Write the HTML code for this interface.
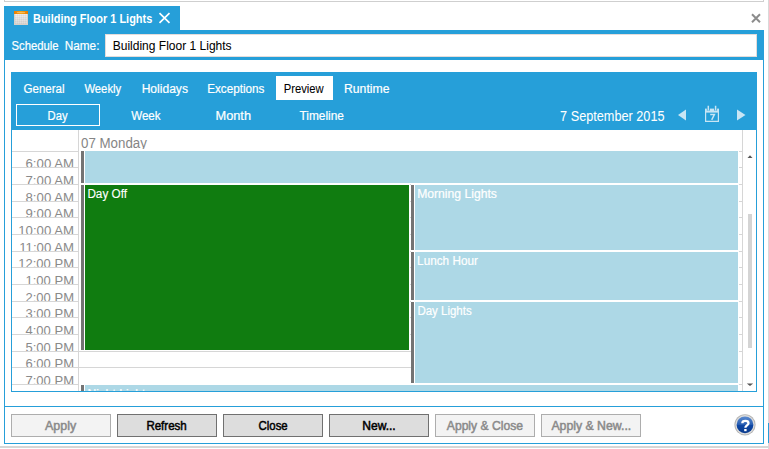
<!DOCTYPE html>
<html><head><meta charset="utf-8">
<style>
html,body{margin:0;padding:0;width:769px;height:449px;overflow:hidden;background:#fff;position:relative;font-family:"Liberation Sans",sans-serif;}
.a{position:absolute;box-sizing:content-box;}
svg text{font-family:"Liberation Sans",sans-serif;white-space:pre;}
</style></head><body>
<div class="a" style="left:4px;top:-10px;width:758px;height:11px;border:1px solid #cfcfcf;border-top:none;"></div>
<div class="a" style="left:768px;top:0px;width:1px;height:449px;background:#d9d9d9;"></div>
<div class="a" style="left:768px;top:423px;width:1px;height:20px;background:#269fd9;"></div>
<div class="a" style="left:0px;top:446px;width:769px;height:2px;background:#d6d6d6;"></div>
<div class="a" style="left:4px;top:6px;width:176px;height:24px;background:#269fd9;"></div>
<div class="a" style="left:14px;top:11px;width:14px;height:14px;background:repeating-linear-gradient(90deg,rgba(0,0,0,0) 0 1px,rgba(0,0,0,0.035) 1px 2px),repeating-linear-gradient(0deg,rgba(0,0,0,0) 0 1px,rgba(0,0,0,0.035) 1px 2px),linear-gradient(#f4f4f4,#dcd9d6);box-shadow:inset 0 0 0 1px #d8d0c8;"></div>
<div class="a" style="left:14px;top:11px;width:14px;height:3px;background:linear-gradient(90deg,#e97d00,#f7a418 50%,#e97d00);"></div>
<div class="a" style="left:17px;top:12px;width:8px;height:1px;background:rgba(255,255,255,0.3);"></div>
<svg class="a" style="left:158px;top:12px" width="13" height="12" viewBox="0 0 13 12"><path d="M1.5 1.2L11.5 10.8M11.5 1.2L1.5 10.8" stroke="#fff" stroke-width="1.7"/></svg>
<svg class="a" style="left:750px;top:13px" width="12" height="11" viewBox="0 0 12 11"><path d="M2 1.2L10 9.2M10 1.2L2 9.2" stroke="#8c8c8c" stroke-width="2"/></svg>
<div class="a" style="left:4px;top:30px;width:760px;height:30px;background:#269fd9;"></div>
<div class="a" style="left:105px;top:34px;width:650px;height:21px;background:#fff;border:1px solid #e4dcda;"></div>
<div class="a" style="left:4px;top:60px;width:758px;height:383px;border:1px solid #269fd9;border-top:none;"></div>
<div class="a" style="left:11px;top:72px;width:744px;height:318px;border:1px solid #269fd9;"></div>
<div class="a" style="left:11px;top:72px;width:746px;height:58px;background:#269fd9;"></div>
<div class="a" style="left:276px;top:76px;width:57px;height:24px;background:#fff;"></div>
<div class="a" style="left:16px;top:104px;width:82px;height:20px;border:1px solid #fff;"></div>
<svg class="a" style="left:670px;top:100px" width="87" height="30" viewBox="670 100 87 30">
<path d="M678 115L686 109.5V120.5Z" fill="#c8e5f4"/>
<path d="M737 109.5L745.5 115L737 120.5Z" fill="#c8e5f4"/>
<path d="M705.6 109V121.4H718.4V109" fill="none" stroke="#c8e5f4" stroke-width="1.2"/>
<rect x="705" y="108.6" width="14" height="4" fill="#c8e5f4"/>
<rect x="706.8" y="108" width="3" height="2.6" fill="#269fd9"/>
<rect x="714.1" y="108" width="3" height="2.6" fill="#269fd9"/>
<path d="M708.3 105.8V110.6M715.6 105.8V110.6" stroke="#c8e5f4" stroke-width="1.5"/>
<path d="M710.2 114.6H714.4L711.7 119.8" fill="none" stroke="#c8e5f4" stroke-width="1.5"/>
</svg>
<div class="a" style="left:78px;top:130px;width:1px;height:261px;background:#d6d6d6;"></div>
<div class="a" style="left:742px;top:130px;width:1px;height:261px;background:#d6d6d6;"></div>
<div class="a" style="left:12px;top:151px;width:66px;height:1px;background:#d6d6d6;"></div>
<div class="a" style="left:79px;top:151px;width:663px;height:1px;background:#d6d6d6;"></div>
<div class="a" style="left:12px;top:167px;width:66px;height:1px;background:#d6d6d6;"></div>
<div class="a" style="left:79px;top:167px;width:663px;height:1px;background:#d6d6d6;"></div>
<div class="a" style="left:12px;top:184px;width:66px;height:1px;background:#d6d6d6;"></div>
<div class="a" style="left:79px;top:184px;width:663px;height:1px;background:#d6d6d6;"></div>
<div class="a" style="left:12px;top:201px;width:66px;height:1px;background:#d6d6d6;"></div>
<div class="a" style="left:79px;top:201px;width:663px;height:1px;background:#d6d6d6;"></div>
<div class="a" style="left:12px;top:217px;width:66px;height:1px;background:#d6d6d6;"></div>
<div class="a" style="left:79px;top:217px;width:663px;height:1px;background:#d6d6d6;"></div>
<div class="a" style="left:12px;top:234px;width:66px;height:1px;background:#d6d6d6;"></div>
<div class="a" style="left:79px;top:234px;width:663px;height:1px;background:#d6d6d6;"></div>
<div class="a" style="left:12px;top:251px;width:66px;height:1px;background:#d6d6d6;"></div>
<div class="a" style="left:79px;top:251px;width:663px;height:1px;background:#d6d6d6;"></div>
<div class="a" style="left:12px;top:267px;width:66px;height:1px;background:#d6d6d6;"></div>
<div class="a" style="left:79px;top:267px;width:663px;height:1px;background:#d6d6d6;"></div>
<div class="a" style="left:12px;top:284px;width:66px;height:1px;background:#d6d6d6;"></div>
<div class="a" style="left:79px;top:284px;width:663px;height:1px;background:#d6d6d6;"></div>
<div class="a" style="left:12px;top:301px;width:66px;height:1px;background:#d6d6d6;"></div>
<div class="a" style="left:79px;top:301px;width:663px;height:1px;background:#d6d6d6;"></div>
<div class="a" style="left:12px;top:317px;width:66px;height:1px;background:#d6d6d6;"></div>
<div class="a" style="left:79px;top:317px;width:663px;height:1px;background:#d6d6d6;"></div>
<div class="a" style="left:12px;top:334px;width:66px;height:1px;background:#d6d6d6;"></div>
<div class="a" style="left:79px;top:334px;width:663px;height:1px;background:#d6d6d6;"></div>
<div class="a" style="left:12px;top:351px;width:66px;height:1px;background:#d6d6d6;"></div>
<div class="a" style="left:79px;top:351px;width:663px;height:1px;background:#d6d6d6;"></div>
<div class="a" style="left:12px;top:367px;width:66px;height:1px;background:#d6d6d6;"></div>
<div class="a" style="left:79px;top:367px;width:663px;height:1px;background:#d6d6d6;"></div>
<div class="a" style="left:12px;top:384px;width:66px;height:1px;background:#d6d6d6;"></div>
<div class="a" style="left:79px;top:384px;width:663px;height:1px;background:#d6d6d6;"></div>
<div class="a" style="left:79px;top:151px;width:660px;height:33px;background:#fff;"></div>
<div class="a" style="left:79px;top:184px;width:331px;height:167px;background:#fff;"></div>
<div class="a" style="left:411px;top:184px;width:328px;height:67px;background:#fff;"></div>
<div class="a" style="left:411px;top:251px;width:328px;height:50px;background:#fff;"></div>
<div class="a" style="left:411px;top:301px;width:328px;height:83px;background:#fff;"></div>
<div class="a" style="left:79px;top:384px;width:660px;height:7px;background:#fff;"></div>
<div class="a" style="left:81px;top:151px;width:3px;height:32px;background:#747474;"></div>
<div class="a" style="left:85px;top:151px;width:653px;height:32px;background:#add8e6;"></div>
<div class="a" style="left:81px;top:185px;width:3px;height:165px;background:#747474;"></div>
<div class="a" style="left:85px;top:185px;width:324px;height:165px;background:#107c10;"></div>
<div class="a" style="left:411px;top:185px;width:3px;height:65px;background:#747474;"></div>
<div class="a" style="left:415px;top:185px;width:323px;height:65px;background:#add8e6;"></div>
<div class="a" style="left:411px;top:252px;width:3px;height:48px;background:#747474;"></div>
<div class="a" style="left:415px;top:252px;width:323px;height:48px;background:#add8e6;"></div>
<div class="a" style="left:411px;top:302px;width:3px;height:81px;background:#747474;"></div>
<div class="a" style="left:415px;top:302px;width:323px;height:81px;background:#add8e6;"></div>
<div class="a" style="left:81px;top:385px;width:3px;height:6px;background:#747474;"></div>
<div class="a" style="left:85px;top:385px;width:653px;height:6px;background:#add8e6;"></div>
<svg class="a" style="left:745px;top:153px" width="10" height="6"><path d="M2.5 5L5 2.2L7.5 5Z" fill="#555"/></svg>
<svg class="a" style="left:745px;top:381px" width="10" height="6"><path d="M1.8 2.4H8.2L5 5Z" fill="#555"/></svg>
<div class="a" style="left:748px;top:214px;width:4px;height:134px;background:#d4d4d4;"></div>
<div class="a" style="left:5px;top:406px;width:758px;height:1px;background:#269fd9;"></div>
<div class="a" style="left:11px;top:414px;width:98px;height:21px;background:#f3f3f3;border:1px solid #adadad;"></div>
<div class="a" style="left:117px;top:414px;width:98px;height:21px;background:#dddddd;border:1px solid #707070;"></div>
<div class="a" style="left:223px;top:414px;width:98px;height:21px;background:#dddddd;border:1px solid #707070;"></div>
<div class="a" style="left:329px;top:414px;width:98px;height:21px;background:#dddddd;border:1px solid #707070;"></div>
<div class="a" style="left:435px;top:414px;width:98px;height:21px;background:#f3f3f3;border:1px solid #adadad;"></div>
<div class="a" style="left:541px;top:414px;width:98px;height:21px;background:#f3f3f3;border:1px solid #adadad;"></div>
<svg class="a" style="left:733px;top:413px" width="24" height="24" viewBox="0 0 24 24">
<defs><linearGradient id="hg" x1="0" y1="0" x2="0" y2="1"><stop offset="0" stop-color="#5a8ad0"/><stop offset="0.48" stop-color="#2a5fb2"/><stop offset="0.5" stop-color="#0d47a6"/><stop offset="1" stop-color="#0a3a8c"/></linearGradient></defs>
<circle cx="12" cy="11.8" r="10.6" fill="#b4b4b4"/>
<circle cx="12" cy="11.8" r="9.7" fill="#dcdcdc"/>
<circle cx="12" cy="11.8" r="8.4" fill="url(#hg)"/>
<path d="M9.3 10.2C9.3 8 10.8 7.9 12.4 7.9C14.2 7.9 15.5 8.8 15.5 10.2C15.5 12.3 12.4 12.5 12.4 14.8" fill="none" stroke="#fff" stroke-width="2.3"/><rect x="11.2" y="16" width="2.4" height="2.2" fill="#fff"/>
</svg>
<svg class="a" style="left:0;top:0" width="769" height="449" viewBox="0 0 769 449">
<defs><clipPath id="c15"><rect x="79" y="130" width="663" height="19"/></clipPath><clipPath id="c16"><rect x="12" y="152" width="66" height="15"/></clipPath><clipPath id="c17"><rect x="12" y="168" width="66" height="16"/></clipPath><clipPath id="c18"><rect x="12" y="185" width="66" height="16"/></clipPath><clipPath id="c19"><rect x="12" y="202" width="66" height="15"/></clipPath><clipPath id="c20"><rect x="12" y="218" width="66" height="16"/></clipPath><clipPath id="c21"><rect x="12" y="235" width="66" height="16"/></clipPath><clipPath id="c22"><rect x="12" y="252" width="66" height="15"/></clipPath><clipPath id="c23"><rect x="12" y="268" width="66" height="16"/></clipPath><clipPath id="c24"><rect x="12" y="285" width="66" height="16"/></clipPath><clipPath id="c25"><rect x="12" y="302" width="66" height="15"/></clipPath><clipPath id="c26"><rect x="12" y="318" width="66" height="16"/></clipPath><clipPath id="c27"><rect x="12" y="335" width="66" height="16"/></clipPath><clipPath id="c28"><rect x="12" y="352" width="66" height="15"/></clipPath><clipPath id="c29"><rect x="12" y="368" width="66" height="16"/></clipPath><clipPath id="c34"><rect x="79" y="385" width="660" height="6"/></clipPath></defs>
<text x="33.00" y="23" font-size="13" fill="#fff" font-weight="bold" textLength="119.29" lengthAdjust="spacingAndGlyphs">Building Floor 1 Lights</text>
<text x="11.50" y="50" font-size="12.5" fill="#fff" stroke="#fff" stroke-width="0.2" textLength="47.16" lengthAdjust="spacingAndGlyphs">Schedule</text>
<text x="64.76" y="50" font-size="12.5" fill="#fff" stroke="#fff" stroke-width="0.2" textLength="34.69" lengthAdjust="spacingAndGlyphs">Name:</text>
<text x="112.74" y="50" font-size="12.5" fill="#000" stroke="#000" stroke-width="0.05" textLength="118.90" lengthAdjust="spacingAndGlyphs">Building Floor 1 Lights</text>
<text x="23.50" y="93" font-size="12.5" fill="#fff" stroke="#fff" stroke-width="0.2" textLength="41.02" lengthAdjust="spacingAndGlyphs">General</text>
<text x="84.40" y="93" font-size="12.5" fill="#fff" stroke="#fff" stroke-width="0.2" textLength="36.82" lengthAdjust="spacingAndGlyphs">Weekly</text>
<text x="141.63" y="93" font-size="12.5" fill="#fff" stroke="#fff" stroke-width="0.2" textLength="46.31" lengthAdjust="spacingAndGlyphs">Holidays</text>
<text x="207.16" y="93" font-size="12.5" fill="#fff" stroke="#fff" stroke-width="0.2" textLength="57.27" lengthAdjust="spacingAndGlyphs">Exceptions</text>
<text x="283.70" y="93" font-size="12.5" fill="#000" stroke="#000" stroke-width="0.05" textLength="40.02" lengthAdjust="spacingAndGlyphs">Preview</text>
<text x="344.02" y="93" font-size="12.5" fill="#fff" stroke="#fff" stroke-width="0.2" textLength="45.43" lengthAdjust="spacingAndGlyphs">Runtime</text>
<text x="47.60" y="120" font-size="12.5" fill="#fff" stroke="#fff" stroke-width="0.2" textLength="20.03" lengthAdjust="spacingAndGlyphs">Day</text>
<text x="131.20" y="120" font-size="12.5" fill="#fff" stroke="#fff" stroke-width="0.2" textLength="29.40" lengthAdjust="spacingAndGlyphs">Week</text>
<text x="215.48" y="120" font-size="12.5" fill="#fff" stroke="#fff" stroke-width="0.2" textLength="35.57" lengthAdjust="spacingAndGlyphs">Month</text>
<text x="299.50" y="120" font-size="12.5" fill="#fff" stroke="#fff" stroke-width="0.2" textLength="44.45" lengthAdjust="spacingAndGlyphs">Timeline</text>
<text x="560.10" y="121" font-size="14.5" fill="#fff" stroke="#fff" stroke-width="0.04" textLength="104.46" lengthAdjust="spacingAndGlyphs">7 September 2015</text>
<text x="81.00" y="148" font-size="14" fill="#858585" textLength="65.90" lengthAdjust="spacingAndGlyphs" clip-path="url(#c15)">07 Monday</text>
<text x="25.50" y="168" font-size="13" fill="#8a8a8a" textLength="48.53" lengthAdjust="spacingAndGlyphs" clip-path="url(#c16)">6:00 AM</text>
<text x="25.50" y="185" font-size="13" fill="#8a8a8a" textLength="48.53" lengthAdjust="spacingAndGlyphs" clip-path="url(#c17)">7:00 AM</text>
<text x="25.50" y="202" font-size="13" fill="#8a8a8a" textLength="48.53" lengthAdjust="spacingAndGlyphs" clip-path="url(#c18)">8:00 AM</text>
<text x="25.50" y="218" font-size="13" fill="#8a8a8a" textLength="48.53" lengthAdjust="spacingAndGlyphs" clip-path="url(#c19)">9:00 AM</text>
<text x="18.25" y="235" font-size="13" fill="#8a8a8a" textLength="55.78" lengthAdjust="spacingAndGlyphs" clip-path="url(#c20)">10:00 AM</text>
<text x="19.22" y="252" font-size="13" fill="#8a8a8a" textLength="54.81" lengthAdjust="spacingAndGlyphs" clip-path="url(#c21)">11:00 AM</text>
<text x="18.25" y="268" font-size="13" fill="#8a8a8a" textLength="55.78" lengthAdjust="spacingAndGlyphs" clip-path="url(#c22)">12:00 PM</text>
<text x="25.50" y="285" font-size="13" fill="#8a8a8a" textLength="48.53" lengthAdjust="spacingAndGlyphs" clip-path="url(#c23)">1:00 PM</text>
<text x="25.50" y="302" font-size="13" fill="#8a8a8a" textLength="48.53" lengthAdjust="spacingAndGlyphs" clip-path="url(#c24)">2:00 PM</text>
<text x="25.50" y="318" font-size="13" fill="#8a8a8a" textLength="48.53" lengthAdjust="spacingAndGlyphs" clip-path="url(#c25)">3:00 PM</text>
<text x="25.50" y="335" font-size="13" fill="#8a8a8a" textLength="48.53" lengthAdjust="spacingAndGlyphs" clip-path="url(#c26)">4:00 PM</text>
<text x="25.50" y="352" font-size="13" fill="#8a8a8a" textLength="48.53" lengthAdjust="spacingAndGlyphs" clip-path="url(#c27)">5:00 PM</text>
<text x="25.50" y="368" font-size="13" fill="#8a8a8a" textLength="48.53" lengthAdjust="spacingAndGlyphs" clip-path="url(#c28)">6:00 PM</text>
<text x="25.50" y="385" font-size="13" fill="#8a8a8a" textLength="48.53" lengthAdjust="spacingAndGlyphs" clip-path="url(#c29)">7:00 PM</text>
<text x="87.40" y="198" font-size="12" fill="#fff" stroke="#fff" stroke-width="0.12" textLength="39.55" lengthAdjust="spacingAndGlyphs">Day Off</text>
<text x="417.20" y="198" font-size="12" fill="#ffffff" stroke="#ffffff" stroke-width="0.2" textLength="79.70" lengthAdjust="spacingAndGlyphs">Morning Lights</text>
<text x="417.10" y="265" font-size="12" fill="#ffffff" stroke="#ffffff" stroke-width="0.2" textLength="60.80" lengthAdjust="spacingAndGlyphs">Lunch Hour</text>
<text x="417.40" y="315" font-size="12" fill="#ffffff" stroke="#ffffff" stroke-width="0.2" textLength="54.30" lengthAdjust="spacingAndGlyphs">Day Lights</text>
<text x="87.40" y="398" font-size="12" fill="#ffffff" stroke="#ffffff" stroke-width="0.2" textLength="64.17" lengthAdjust="spacingAndGlyphs" clip-path="url(#c34)">Night Lights</text>
<text x="45.00" y="430" font-size="12.5" fill="#8a8a8a" stroke="#8a8a8a" stroke-width="0.5" textLength="31.15" lengthAdjust="spacingAndGlyphs">Apply</text>
<text x="146.38" y="430" font-size="12.5" fill="#000" stroke="#000" stroke-width="0.5" textLength="40.38" lengthAdjust="spacingAndGlyphs">Refresh</text>
<text x="258.60" y="430" font-size="12.5" fill="#000" stroke="#000" stroke-width="0.5" textLength="29.06" lengthAdjust="spacingAndGlyphs">Close</text>
<text x="362.23" y="430" font-size="12.5" fill="#000" stroke="#000" stroke-width="0.5" textLength="33.52" lengthAdjust="spacingAndGlyphs">New...</text>
<text x="446.80" y="430" font-size="12.5" fill="#8a8a8a" stroke="#8a8a8a" stroke-width="0.5" textLength="76.15" lengthAdjust="spacingAndGlyphs">Apply &amp; Close</text>
<text x="551.40" y="430" font-size="12.5" fill="#8a8a8a" stroke="#8a8a8a" stroke-width="0.5" textLength="79.86" lengthAdjust="spacingAndGlyphs">Apply &amp; New...</text>
</svg>
</body></html>
